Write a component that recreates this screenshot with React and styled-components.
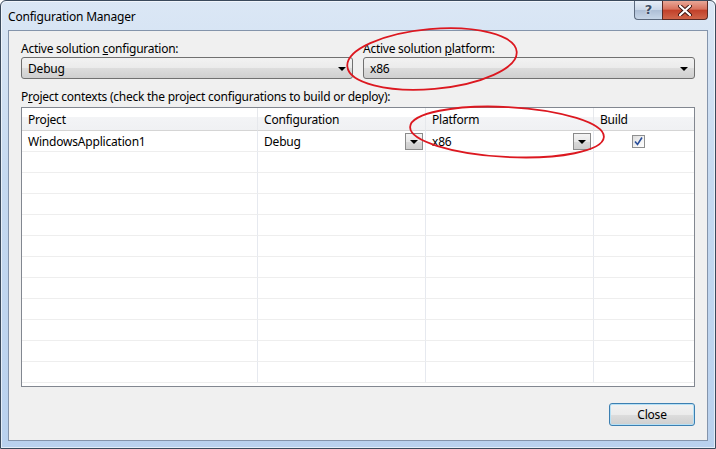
import styled, { createGlobalStyle } from "styled-components";

const GlobalStyle = createGlobalStyle`
    html, body {
        margin: 0;
        padding: 0;
        background: #ffffff;
    }
    body {
        font-family: "Noto Sans", "Open Sans", "Liberation Sans", sans-serif;
        font-size: 12px;
        color: #000;
    }
    * { box-sizing: border-box; }
`

const rows = [
    { project: "WindowsApplication1", config: "Debug", platform: "x86", build: true },
];
const EMPTY_ROWS = 11;

export default function App(){
    return(
        <>
            <GlobalStyle />
            <Frame>
                <TitleBar>
                    <Title>Configuration Manager</Title>
                    <Caption>
                        <HelpButton>?</HelpButton>
                        <CloseX>
                            <svg width="14" height="11" viewBox="0 0 14 11">
                                <path d="M2 1 L12 10 M12 1 L2 10" stroke="#3a1410" strokeWidth="4" strokeLinecap="round" />
                                <path d="M2 1 L12 10 M12 1 L2 10" stroke="#ffffff" strokeWidth="2.2" strokeLinecap="round" />
                            </svg>
                        </CloseX>
                    </Caption>
                </TitleBar>
                <Client>
                    <TopRow>
                        <Field>
                            <Label>Active solution <u>c</u>onfiguration:</Label>
                            <Combo>
                                <span>Debug</span>
                                <Arrow />
                            </Combo>
                        </Field>
                        <Field>
                            <Label>Active solution <u>p</u>latform:</Label>
                            <Combo>
                                <span>x86</span>
                                <Arrow />
                            </Combo>
                        </Field>
                    </TopRow>
                    <SectionLabel>P<u>r</u>oject contexts (check the project configurations to build or deploy):</SectionLabel>
                    <Grid>
                        <HeaderCell>Project</HeaderCell>
                        <HeaderCell>Configuration</HeaderCell>
                        <HeaderCell>Platform</HeaderCell>
                        <HeaderCell $last>Build</HeaderCell>
                        {rows.map((r) => (
                            <Row key={r.project}>
                                <Cell>{r.project}</Cell>
                                <Cell>
                                    <span>{r.config}</span>
                                    <DropButton><Arrow /></DropButton>
                                </Cell>
                                <Cell>
                                    <span>{r.platform}</span>
                                    <DropButton><Arrow /></DropButton>
                                </Cell>
                                <Cell $center $last>
                                    <Check>
                                        {r.build && (
                                            <svg width="11" height="11" viewBox="0 0 11 11">
                                                <path d="M2 5.5 L4.5 8.5 L9 1.5" fill="none" stroke="#2a4f9b" strokeWidth="1.6" />
                                            </svg>
                                        )}
                                    </Check>
                                </Cell>
                            </Row>
                        ))}
                        {Array.from({ length: EMPTY_ROWS }).map((_, i) => (
                            <Row key={i}>
                                <Cell />
                                <Cell />
                                <Cell />
                                <Cell $last />
                            </Row>
                        ))}
                    </Grid>
                    <Footer>
                        <Button>Close</Button>
                    </Footer>
                </Client>
                <Marks width="716" height="449" viewBox="0 0 716 449">
                    <ellipse cx="432" cy="59" rx="85" ry="30" transform="rotate(-5 432 59)" />
                    <ellipse cx="507" cy="132" rx="97" ry="25" transform="rotate(3 507 132)" />
                </Marks>
            </Frame>
        </>
    );
}

const Frame = styled.div`
    position: relative;
    width: 716px;
    height: 449px;
    display: flex;
    flex-direction: column;
    border: 1px solid #3b4a5c;
    border-radius: 6px 6px 0 0;
    background: linear-gradient(180deg, #dbe7f5 0%, #c5d9f0 40%, #b9d1ee 100%);
    box-shadow: inset 0 0 0 1px rgba(255,255,255,0.6);
    overflow: hidden;
`

const TitleBar = styled.div`
    height: 29px;
    display: flex;
    justify-content: space-between;
    align-items: flex-start;
    padding: 0 7px 0 7px;
`

const Title = styled.div`
    padding-top: 7px;
    letter-spacing: -0.2px;
    color: #000;
`

const Caption = styled.div`
    display: flex;
`

const HelpButton = styled.div`
    width: 28px;
    height: 19px;
    border: 1px solid #5c6a7e;
    border-top: none;
    border-right: none;
    border-radius: 0 0 0 4px;
    background: linear-gradient(180deg, #e6eef8 0%, #c9d7e8 50%, #aebfd6 52%, #c7d6e8 100%);
    color: #3d4e66;
    font-family: "DejaVu Sans", sans-serif;
    font-size: 13px;
    font-weight: bold;
    text-align: center;
    line-height: 17px;
    text-shadow: 0 0 2px #ffffff;
`

const CloseX = styled.div`
    width: 46px;
    height: 19px;
    border: 1px solid #5a2a24;
    border-top: none;
    border-radius: 0 0 4px 0;
    background: linear-gradient(180deg, #e8a797 0%, #d8735e 45%, #c2412a 52%, #d0654a 100%);
    display: flex;
    align-items: center;
    justify-content: center;
`

const Client = styled.div`
    flex: 1;
    margin: 0 7px 7px 7px;
    border: 1px solid #8494ab;
    background: #f0f0f0;
    padding: 9px 12px 0 12px;
    display: flex;
    flex-direction: column;
`

const TopRow = styled.div`
    display: grid;
    grid-template-columns: 332px 332px;
    column-gap: 10px;
`

const Field = styled.div`
    display: flex;
    flex-direction: column;
`

const Label = styled.div`
    height: 17px;
    line-height: 17px;
    letter-spacing: -0.25px;
`

const SectionLabel = styled(Label)`
    margin-top: 9px;
    margin-bottom: 2px;
`

const Combo = styled.div`
    height: 22px;
    display: flex;
    align-items: center;
    justify-content: space-between;
    padding: 0 6px 0 6px;
    border: 1px solid #707070;
    border-radius: 3px;
    background: linear-gradient(180deg, #f2f2f2 0%, #ebebeb 50%, #dddddd 51%, #cfcfcf 100%);
    letter-spacing: -0.2px;
`

const Arrow = styled.span`
    width: 0;
    height: 0;
    border-left: 4px solid transparent;
    border-right: 4px solid transparent;
    border-top: 4px solid #000;
    margin-top: 1px;
`

const Grid = styled.div`
    height: 280px;
    display: grid;
    grid-template-columns: 236px 168px 168px 1fr;
    grid-template-rows: 23px repeat(12, 21px);
    border: 1px solid #828790;
    background: #ffffff;
    overflow: hidden;
`

const HeaderCell = styled.div`
    display: flex;
    align-items: center;
    padding-left: 6px;
    background: linear-gradient(180deg, #ffffff 0%, #ffffff 40%, #f3f4f6 41%, #f0f1f3 100%);
    border-bottom: 1px solid #d5d5d5;
    border-right: ${(p) => (p.$last ? "none" : "1px solid #e6e8ec")};
    letter-spacing: -0.2px;
`

const Row = styled.div`
    display: contents;
`

const Cell = styled.div`
    display: flex;
    align-items: center;
    justify-content: ${(p) => (p.$center ? "center" : "space-between")};
    padding: ${(p) => (p.$center ? "0 12px 0 0" : "0 2px 0 6px")};
    border-bottom: 1px solid #eeeeee;
    border-right: ${(p) => (p.$last ? "none" : "1px solid #e6e9ef")};
    letter-spacing: -0.2px;
`

const DropButton = styled.div`
    width: 18px;
    height: 17px;
    display: flex;
    align-items: center;
    justify-content: center;
    border: 1px solid #8a8a8a;
    background: linear-gradient(180deg, #f4f4f4 0%, #e8e8e8 50%, #d9d9d9 51%, #cdcdcd 100%);
`

const Check = styled.div`
    width: 13px;
    height: 13px;
    border: 1px solid #8e8f8f;
    background: linear-gradient(135deg, #dcdcdc 0%, #f4f4f4 60%, #ffffff 100%);
    display: flex;
    align-items: center;
    justify-content: center;
`

const Footer = styled.div`
    display: flex;
    justify-content: flex-end;
    padding-top: 16px;
`

const Button = styled.div`
    width: 86px;
    height: 23px;
    display: flex;
    align-items: center;
    justify-content: center;
    border: 1px solid #3c7fb1;
    border-radius: 3px;
    background: linear-gradient(180deg, #f2f2f2 0%, #ebebeb 50%, #dddddd 51%, #cfcfcf 100%);
    box-shadow: inset 0 0 0 1px #b6e0f5;
    letter-spacing: -0.2px;
`

const Marks = styled.svg`
    position: absolute;
    left: -1px;
    top: -1px;
    pointer-events: none;
    fill: none;
    stroke: #dc1820;
    stroke-width: 1.8;
`
